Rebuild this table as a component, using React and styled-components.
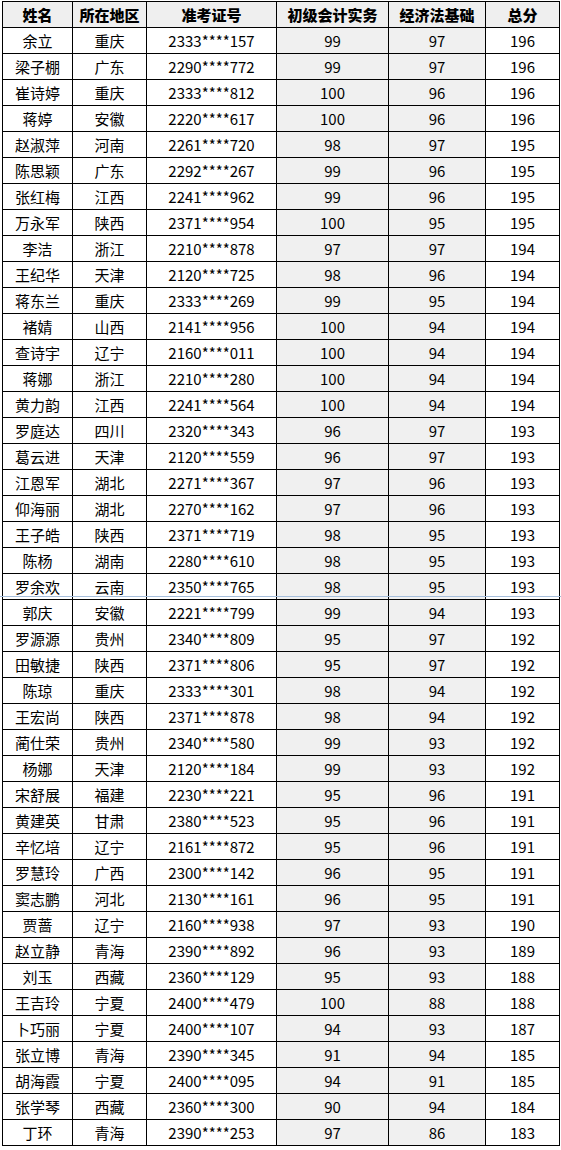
import React from 'react'
import styled, { createGlobalStyle } from 'styled-components'

const rows = [
  ['余立', '重庆', '2333****157', 99, 97, 196],
  ['梁子棚', '广东', '2290****772', 99, 97, 196],
  ['崔诗婷', '重庆', '2333****812', 100, 96, 196],
  ['蒋婷', '安徽', '2220****617', 100, 96, 196],
  ['赵淑萍', '河南', '2261****720', 98, 97, 195],
  ['陈思颖', '广东', '2292****267', 99, 96, 195],
  ['张红梅', '江西', '2241****962', 99, 96, 195],
  ['万永军', '陕西', '2371****954', 100, 95, 195],
  ['李洁', '浙江', '2210****878', 97, 97, 194],
  ['王纪华', '天津', '2120****725', 98, 96, 194],
  ['蒋东兰', '重庆', '2333****269', 99, 95, 194],
  ['褚婧', '山西', '2141****956', 100, 94, 194],
  ['查诗宇', '辽宁', '2160****011', 100, 94, 194],
  ['蒋娜', '浙江', '2210****280', 100, 94, 194],
  ['黄力韵', '江西', '2241****564', 100, 94, 194],
  ['罗庭达', '四川', '2320****343', 96, 97, 193],
  ['葛云进', '天津', '2120****559', 96, 97, 193],
  ['江恩军', '湖北', '2271****367', 97, 96, 193],
  ['仰海丽', '湖北', '2270****162', 97, 96, 193],
  ['王子皓', '陕西', '2371****719', 98, 95, 193],
  ['陈杨', '湖南', '2280****610', 98, 95, 193],
  ['罗余欢', '云南', '2350****765', 98, 95, 193],
  ['郭庆', '安徽', '2221****799', 99, 94, 193],
  ['罗源源', '贵州', '2340****809', 95, 97, 192],
  ['田敏捷', '陕西', '2371****806', 95, 97, 192],
  ['陈琼', '重庆', '2333****301', 98, 94, 192],
  ['王宏尚', '陕西', '2371****878', 98, 94, 192],
  ['蔺仕荣', '贵州', '2340****580', 99, 93, 192],
  ['杨娜', '天津', '2120****184', 99, 93, 192],
  ['宋舒展', '福建', '2230****221', 95, 96, 191],
  ['黄建英', '甘肃', '2380****523', 95, 96, 191],
  ['辛忆培', '辽宁', '2161****872', 95, 96, 191],
  ['罗慧玲', '广西', '2300****142', 96, 95, 191],
  ['窦志鹏', '河北', '2130****161', 96, 95, 191],
  ['贾蔷', '辽宁', '2160****938', 97, 93, 190],
  ['赵立静', '青海', '2390****892', 96, 93, 189],
  ['刘玉', '西藏', '2360****129', 95, 93, 188],
  ['王吉玲', '宁夏', '2400****479', 100, 88, 188],
  ['卜巧丽', '宁夏', '2400****107', 94, 93, 187],
  ['张立博', '青海', '2390****345', 91, 94, 185],
  ['胡海霞', '宁夏', '2400****095', 94, 91, 185],
  ['张学琴', '西藏', '2360****300', 90, 94, 184],
  ['丁环', '青海', '2390****253', 97, 86, 183]
]

const headers = ['姓名', '所在地区', '准考证号', '初级会计实务', '经济法基础', '总分']
const widths = [70, 74, 130, 112, 97, 74]
// the two subject columns are shaded grey
const shaded = [false, false, false, true, true, false]

class App extends React.Component {
  render() {
    return (
      <Page>
        <GlobalStyle />
        <Sheet>
          <colgroup>
            {widths.map((w, i) => <col key={i} width={w} />)}
          </colgroup>
          <thead>
            <tr>
              {headers.map(h => <Head key={h}>{h}</Head>)}
            </tr>
          </thead>
          <tbody>
            {rows.map(r => (
              <Row key={r[2]}>
                {r.map((v, i) => <Cell key={i} shade={shaded[i] ? 1 : 0}>{v}</Cell>)}
              </Row>
            ))}
          </tbody>
        </Sheet>
        <PageBreak />
      </Page>
    )
  }
}

const GlobalStyle = createGlobalStyle`
  body {
    margin: 0;
    background: #ffffff;
    font-family: "Noto Sans CJK SC", "Noto Sans", sans-serif;
  }
`
const Page = styled.div`
  position: relative;
  width: 561px;
  height: 1150px;
  padding: 1px 0 0 2px;
  box-sizing: border-box;
  overflow: hidden;
`
const Sheet = styled.table`
  border-collapse: collapse;
  table-layout: fixed;
  width: 557px;
  color: #000;
`
const Head = styled.th`
  height: 25px;
  padding: 0;
  border: 1px solid #000;
  background: #efefef;
  font-size: 15px;
  font-weight: 900;
  text-align: center;
  line-height: 1;
`
const Row = styled.tr`
  height: 26px;
`
const Cell = styled.td`
  height: 25px;
  padding: 0;
  border: 1px solid #000;
  background: ${p => (p.shade ? '#f0f0f0' : '#ffffff')};
  font-size: 15px;
  text-align: center;
  line-height: 1;
`
const PageBreak = styled.div`
  position: absolute;
  left: 0;
  right: 0;
  top: 596px;
  height: 0;
  border-top: 1px solid #a7bfdc;
`

export default App
